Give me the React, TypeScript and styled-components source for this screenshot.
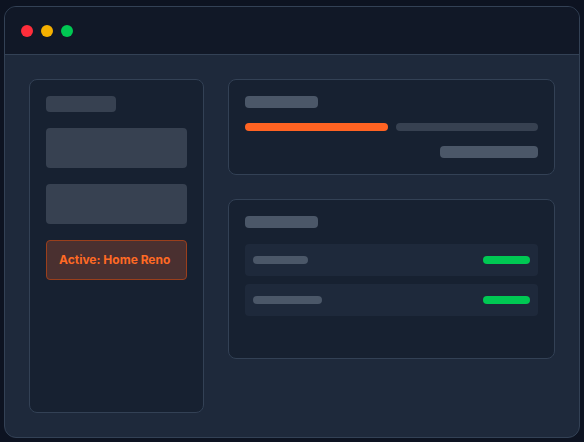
import styled, { createGlobalStyle } from "styled-components";

const Global = createGlobalStyle`
  html, body {
    margin: 0;
    padding: 0;
    background: #0d1321;
    font-family: Inter, "Noto Sans", "Liberation Sans", sans-serif;
  }
  body {
    padding: 6px 4px;
  }
`;

const Window = styled.div`
  width: 576px;
  height: 432px;
  box-sizing: border-box;
  border: 1px solid #334155;
  border-radius: 12px;
  overflow: hidden;
  background: #1e293b;
  display: flex;
  flex-direction: column;
`;

const TitleBar = styled.div`
  height: 48px;
  box-sizing: border-box;
  flex-shrink: 0;
  background: #111827;
  border-bottom: 1px solid #334155;
  display: flex;
  align-items: center;
  gap: 8px;
  padding: 1px 16px 0;
`;

const Dot = styled.span<{ color: string }>`
  width: 12px;
  height: 12px;
  border-radius: 50%;
  background: ${(p) => p.color};
`;

const Body = styled.div`
  flex: 1;
  padding: 24px;
  display: grid;
  grid-template-columns: 175px 1fr;
  gap: 24px;
`;

const Panel = styled.div`
  box-sizing: border-box;
  background: #172131;
  border: 1px solid #334155;
  border-radius: 8px;
  padding: 16px;
  display: flex;
  flex-direction: column;
`;

const Sidebar = styled(Panel)`
  gap: 16px;
`;

const Main = styled.div`
  display: flex;
  flex-direction: column;
  gap: 24px;
`;

const Pill = styled.div<{ w: number; h: number; color: string }>`
  width: ${(p) => p.w}px;
  height: ${(p) => p.h}px;
  border-radius: 4px;
  background: ${(p) => p.color};
  flex-shrink: 0;
`;

const Block = styled.div`
  height: 40px;
  border-radius: 4px;
  background: #374151;
`;

const ActiveBox = styled.div`
  height: 40px;
  box-sizing: border-box;
  border: 1px solid #9a3f1c;
  border-radius: 4px;
  background: #4a3030;
  color: #ff6a24;
  font-size: 12px;
  font-weight: 700;
  line-height: 1;
  display: flex;
  align-items: center;
  padding: 0 0 1px 12px;
`;

const ProgressCard = styled(Panel)`
  gap: 15px;
`;

const Progress = styled.div`
  display: flex;
  gap: 8px;
`;

const Bar = styled.div<{ color: string }>`
  flex: 1;
  height: 8px;
  border-radius: 4px;
  background: ${(p) => p.color};
`;

const RightAlign = styled.div`
  display: flex;
  justify-content: flex-end;
`;

const ListCard = styled(Panel)`
  height: 160px;
  gap: 16px;
`;

const Rows = styled.div`
  display: flex;
  flex-direction: column;
  gap: 8px;
`;

const Row = styled.div`
  height: 32px;
  border-radius: 4px;
  background: #1e293b;
  display: flex;
  align-items: center;
  justify-content: space-between;
  padding: 0 8px;
`;

const rows = [55, 69];

export default function App() {
  return (
    <>
      <Global />
      <Window>
        <TitleBar>
          <Dot color="#ff2d3b" />
          <Dot color="#f5b000" />
          <Dot color="#00c853" />
        </TitleBar>
        <Body>
          <Sidebar>
            <Pill w={70} h={16} color="#374151" />
            <Block />
            <Block />
            <ActiveBox>Active: Home Reno</ActiveBox>
          </Sidebar>
          <Main>
            <ProgressCard>
              <Pill w={73} h={12} color="#4b5768" />
              <Progress>
                <Bar color="#ff6322" />
                <Bar color="#374151" />
              </Progress>
              <RightAlign>
                <Pill w={98} h={12} color="#4b5768" />
              </RightAlign>
            </ProgressCard>
            <ListCard>
              <Pill w={73} h={12} color="#4b5768" />
              <Rows>
                {rows.map((w, i) => (
                  <Row key={i}>
                    <Pill w={w} h={8} color="#4b5768" />
                    <Pill w={47} h={8} color="#00c853" />
                  </Row>
                ))}
              </Rows>
            </ListCard>
          </Main>
        </Body>
      </Window>
    </>
  );
}
